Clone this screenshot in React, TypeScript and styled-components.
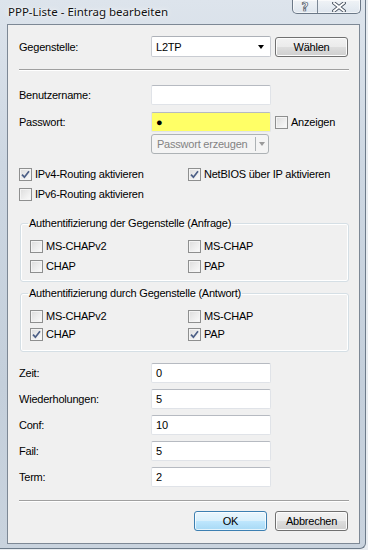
import React from "react";
import styled, { createGlobalStyle } from "styled-components";

const Global = createGlobalStyle`
  html, body { margin: 0; padding: 0; background: #e9edf1; }
  body { font-family: "Liberation Sans", Arial, sans-serif; font-size: 11px; letter-spacing: -0.22px; color: #000; }
  * { box-sizing: border-box; }
`;

const Window = styled.div`
  width: 366px;
  height: 549px;
  display: flex;
  flex-direction: column;
  background: linear-gradient(180deg, #dde4ec 0%, #cdd7e2 30%, #c4cfdb 70%, #c9d3de 100%);
  border-right: 1px solid #6d7b8a;
  border-bottom: 1px solid #6d7b8a;
  border-bottom-right-radius: 6px;
`;

const TitleBar = styled.div`
  height: 24px;
  display: flex;
  align-items: flex-start;
  flex-shrink: 0;
`;

const Title = styled.div`
  margin: 4px 0 0 8px;
  font-family: "Noto Sans", "Open Sans", sans-serif;
  font-size: 11.5px;
  letter-spacing: 0;
  line-height: 16px;
  color: #111;
  text-shadow: 0 0 6px rgba(255, 255, 255, 0.95), 0 0 2px rgba(255, 255, 255, 0.9);
`;

const CaptionButtons = styled.div`
  margin-left: auto;
  margin-right: 4px;
  display: flex;
  height: 14px;
  border: 1px solid #6b7887;
  border-top: 0;
  border-radius: 0 0 5px 5px;
  overflow: hidden;
  background: linear-gradient(180deg, rgba(255, 255, 255, 0.55), rgba(225, 233, 242, 0.45));
  box-shadow: inset 0 0 0 1px rgba(255, 255, 255, 0.6);
`;

const CaptionButton = styled.div<{ $w: number; $divider?: boolean }>`
  width: ${(p) => p.$w}px;
  display: flex;
  align-items: center;
  justify-content: center;
  border-right: ${(p) => (p.$divider ? "1px solid #7c8896" : "0")};
  font-family: "DejaVu Sans", sans-serif;
  font-weight: bold;
  font-size: 12px;
  line-height: 12px;
  letter-spacing: 0;
  color: #fff;
  -webkit-text-stroke: 0.7px #4a5462;
`;

const Client = styled.div`
  margin: 0 5px 4px 7px;
  flex: 1;
  background: #f0f0f0;
  border: 1px solid #7d8895;
  padding: 0 10px 0 11px;
  display: flex;
  flex-direction: column;
`;

const Row = styled.div<{ $mt: number; $h?: number }>`
  display: flex;
  align-items: center;
  margin-top: ${(p) => p.$mt}px;
  height: ${(p) => p.$h ?? 20}px;
  flex-shrink: 0;
`;

const Label = styled.div`
  width: 132px;
  flex-shrink: 0;
  white-space: nowrap;
`;

const TextBox = styled.div<{ $bg?: string }>`
  width: 120px;
  height: 20px;
  background: ${(p) => p.$bg ?? "#fff"};
  border: 1px solid #e0e3e8;
  border-top-color: #b6bac1;
  border-radius: 2px;
  padding: 0 4px;
  display: flex;
  align-items: center;
  white-space: nowrap;
`;

const Bullet = styled.span`
  font-size: 11px;
  line-height: 11px;
`;

const Combo = styled.div`
  width: 120px;
  height: 21px;
  background: #fff;
  border: 1px solid #c9ccd2;
  border-top-color: #adb1b8;
  border-radius: 2px;
  padding: 0 6px 0 4px;
  display: flex;
  align-items: center;
  justify-content: space-between;
`;

const Arrow = styled.span<{ $color: string }>`
  width: 0;
  height: 0;
  border-left: 3.5px solid transparent;
  border-right: 3.5px solid transparent;
  border-top: 4px solid ${(p) => p.$color};
`;

const Button = styled.div<{ $default?: boolean; $push?: boolean }>`
  width: 73px;
  height: 20px;
  margin-left: ${(p) => (p.$push ? "auto" : "0")};
  margin-right: 1px;
  display: flex;
  align-items: center;
  justify-content: center;
  border: 1px solid ${(p) => (p.$default ? "#3c7fb1" : "#707070")};
  border-radius: 3px;
  background: ${(p) =>
    p.$default
      ? "linear-gradient(180deg, #eaf6fd 0%, #d9f0fc 48%, #bee6fd 52%, #a7d9f5 100%)"
      : "linear-gradient(180deg, #f2f2f2 0%, #ebebeb 48%, #dddddd 52%, #cfcfcf 100%)"};
  box-shadow: inset 0 0 0 1px ${(p) => (p.$default ? "rgba(255,255,255,0.7)" : "#fcfcfc")};
`;

const ButtonGap = styled.div`
  width: 7px;
  flex-shrink: 0;
`;

const SideCheck = styled.div`
  display: flex;
  align-items: center;
  gap: 3px;
  margin-left: 4px;
`;

const SplitButton = styled.div`
  margin-left: 132px;
  width: 118px;
  height: 20px;
  display: flex;
  align-items: stretch;
  border: 1px solid #adb2b5;
  border-radius: 3px;
  background: #f4f4f4;
  color: #838383;
`;

const SplitText = styled.div`
  flex: 1;
  display: flex;
  align-items: center;
  padding-left: 5px;
`;

const SplitArrow = styled.div`
  width: 13px;
  border-left: 1px solid #adb2b5;
  display: flex;
  align-items: center;
  justify-content: center;
  margin: 2px 0;
`;

const Separator = styled.div<{ $mt: number }>`
  margin-top: ${(p) => p.$mt}px;
  height: 2px;
  border-top: 1px solid #a0a0a0;
  border-bottom: 1px solid #ffffff;
  flex-shrink: 0;
`;

const CheckGrid = styled.div<{ $mt: number; $col: number }>`
  margin-top: ${(p) => p.$mt}px;
  display: grid;
  grid-template-columns: ${(p) => p.$col}px 1fr;
  height: 16px;
  align-items: center;
  flex-shrink: 0;
`;

const CheckItem = styled.div`
  display: flex;
  align-items: center;
  gap: 3px;
  white-space: nowrap;
`;

const Box = styled.span`
  width: 13px;
  height: 13px;
  flex-shrink: 0;
  border: 1px solid #8e8f8f;
  background: linear-gradient(135deg, #dcdcdc 0%, #ececec 50%, #fbfbfb 100%);
  box-shadow: inset 0 0 0 1px #f4f4f4;
  display: flex;
  align-items: center;
  justify-content: center;
`;

const Group = styled.fieldset<{ $mt: number; $pt: number; $pb: number; $gap: number }>`
  margin: ${(p) => p.$mt}px 0 0 1px;
  width: 329px;
  padding: ${(p) => p.$pt}px 9px ${(p) => p.$pb}px 9px;
  border: 1px solid #d5dfe5;
  border-radius: 3px;
  box-shadow: inset 0 0 0 1px #ffffff;
  display: flex;
  flex-direction: column;
  gap: ${(p) => p.$gap}px;
  flex-shrink: 0;
  min-inline-size: 0;
`;

const Legend = styled.legend`
  padding: 0 1px;
  margin-left: -2px;
  line-height: 13px;
  height: 13px;
`;

const CheckMark = () => (
  <svg width="9" height="9" viewBox="0 0 9 9">
    <path d="M1 4.6 L3.4 7.2 L8 1.2" fill="none" stroke="#4c5f86" strokeWidth="1.7" />
  </svg>
);

const Check = ({ checked, label }: { checked?: boolean; label: string }) => (
  <CheckItem>
    <Box>{checked && <CheckMark />}</Box>
    <span>{label}</span>
  </CheckItem>
);

const CloseIcon = () => (
  <svg width="14" height="10" viewBox="0 0 14 10">
    <path d="M2 1 L12 9 M12 1 L2 9" stroke="#4a5462" strokeWidth="3.6" strokeLinecap="square" />
    <path d="M2 1 L12 9 M12 1 L2 9" stroke="#ffffff" strokeWidth="1.8" strokeLinecap="square" />
  </svg>
);

const timing = [
  { label: "Zeit:", value: "0" },
  { label: "Wiederholungen:", value: "5" },
  { label: "Conf:", value: "10" },
  { label: "Fail:", value: "5" },
  { label: "Term:", value: "2" },
];

export default function App() {
  return (
    <>
      <Global />
      <Window>
        <TitleBar>
          <Title>PPP-Liste - Eintrag bearbeiten</Title>
          <CaptionButtons>
            <CaptionButton $w={25} $divider>?</CaptionButton>
            <CaptionButton $w={42}>
              <CloseIcon />
            </CaptionButton>
          </CaptionButtons>
        </TitleBar>
        <Client>
          <Row $mt={11} $h={21}>
            <Label>Gegenstelle:</Label>
            <Combo>
              <span>L2TP</span>
              <Arrow $color="#000" />
            </Combo>
            <Button $push>Wählen</Button>
          </Row>
          <Separator $mt={12} />
          <Row $mt={14}>
            <Label>Benutzername:</Label>
            <TextBox />
          </Row>
          <Row $mt={7}>
            <Label>Passwort:</Label>
            <TextBox $bg="#ffff66">
              <Bullet>●</Bullet>
            </TextBox>
            <SideCheck>
              <Box />
              <span>Anzeigen</span>
            </SideCheck>
          </Row>
          <Row $mt={2}>
            <SplitButton>
              <SplitText>Passwort erzeugen</SplitText>
              <SplitArrow>
                <Arrow $color="#9a9a9a" />
              </SplitArrow>
            </SplitButton>
          </Row>
          <CheckGrid $mt={12} $col={169}>
            <Check checked label="IPv4-Routing aktivieren" />
            <Check checked label="NetBIOS über IP aktivieren" />
          </CheckGrid>
          <CheckGrid $mt={4} $col={169}>
            <Check label="IPv6-Routing aktivieren" />
          </CheckGrid>
          <Group $mt={15} $pt={8} $pb={7} $gap={4}>
            <Legend>Authentifizierung der Gegenstelle (Anfrage)</Legend>
            <CheckGrid $mt={0} $col={158}>
              <Check label="MS-CHAPv2" />
              <Check label="MS-CHAP" />
            </CheckGrid>
            <CheckGrid $mt={0} $col={158}>
              <Check label="CHAP" />
              <Check label="PAP" />
            </CheckGrid>
          </Group>
          <Group $mt={5} $pt={8} $pb={9} $gap={2}>
            <Legend>Authentifizierung durch Gegenstelle (Antwort)</Legend>
            <CheckGrid $mt={0} $col={158}>
              <Check label="MS-CHAPv2" />
              <Check label="MS-CHAP" />
            </CheckGrid>
            <CheckGrid $mt={0} $col={158}>
              <Check checked label="CHAP" />
              <Check checked label="PAP" />
            </CheckGrid>
          </Group>
          {timing.map((t, i) => (
            <Row key={t.label} $mt={i === 0 ? 11 : 6}>
              <Label>{t.label}</Label>
              <TextBox>{t.value}</TextBox>
            </Row>
          ))}
          <Separator $mt={13} />
          <Row $mt={9}>
            <Button $default $push>OK</Button>
            <ButtonGap />
            <Button>Abbrechen</Button>
          </Row>
        </Client>
      </Window>
    </>
  );
}
